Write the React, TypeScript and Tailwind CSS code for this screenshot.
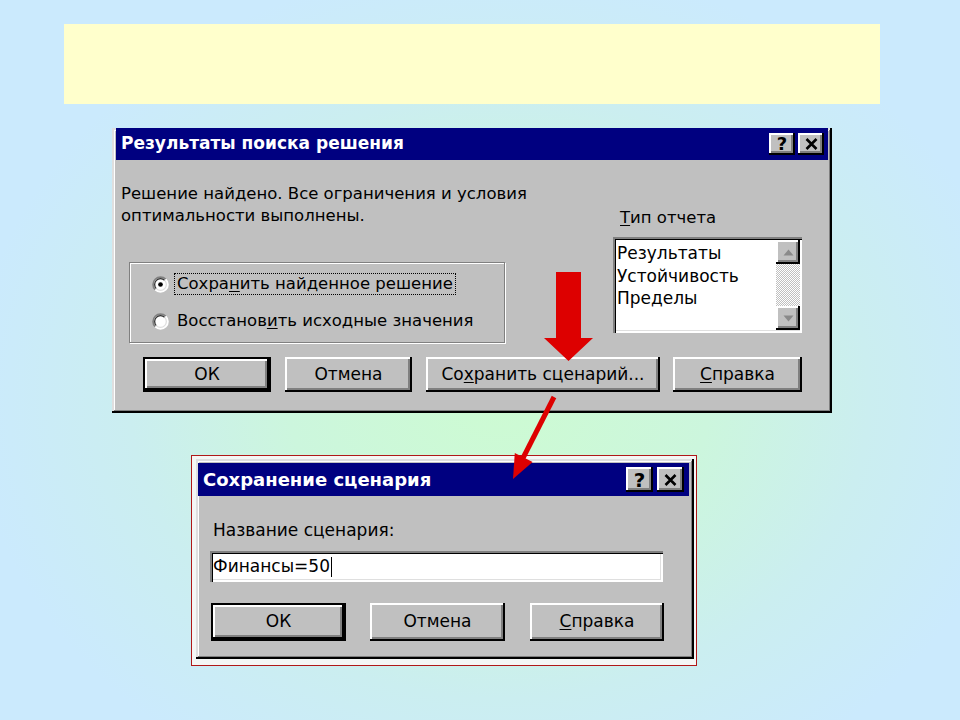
import React from "react"

// Win95 bevels (screenshot is a scaled-up dialog, so the lines are ~2px)
const raised =
  "bg-[#c0c0c0] shadow-[inset_-2px_-2px_0_#000,inset_2px_2px_0_#fff,inset_-4px_-4px_0_#808080]"
const sunken =
  "shadow-[inset_2px_2px_0_#808080,inset_3px_3px_0_#000,inset_-2px_-2px_0_#fff,inset_-3px_-3px_0_#dfdfdf]"
const windowFrame =
  "bg-[#c0c0c0] shadow-[inset_-2px_-2px_0_#000,inset_2px_2px_0_#dfdfdf,inset_-3px_-3px_0_#808080,inset_3px_3px_0_#fff]"

function Radio({ checked }: { checked?: boolean }) {
  return (
    <svg width="17" height="17" viewBox="0 0 16 16" className="shrink-0">
      <circle cx="8" cy="8" r="7" fill="#fff" />
      <path d="M3.05 12.95A7 7 0 0 1 12.95 3.05" stroke="#808080" strokeWidth="1.6" fill="none" />
      <path d="M12.95 3.05A7 7 0 0 1 3.05 12.95" stroke="#ffffff" strokeWidth="1.6" fill="none" />
      <path d="M4.1 11.9A5.5 5.5 0 0 1 11.9 4.1" stroke="#303030" strokeWidth="1.2" fill="none" />
      <path d="M11.9 4.1A5.5 5.5 0 0 1 4.1 11.9" stroke="#dfdfdf" strokeWidth="1.2" fill="none" />
      {checked && <circle cx="8" cy="8" r="2.2" fill="#000" />}
    </svg>
  )
}

function CaptionButtons({ size }: { size: "sm" | "lg" }) {
  const box =
    size === "sm"
      ? "w-[26px] h-[22px] text-[18px]"
      : "w-[27px] h-[25px] text-[20px]"
  return (
    <div className={size === "sm" ? "flex gap-[3px]" : "flex gap-[4px]"}>
      <div className={`${raised} ${box} flex items-center justify-center font-bold leading-none text-black`}>?</div>
      <div className={`${raised} ${box} flex items-center justify-center font-bold leading-none text-black`}>
        <svg width="13" height="12" viewBox="0 0 13 12">
          <path d="M1.5 1l10 10M11.5 1l-10 10" stroke="#000" strokeWidth="2.6" />
        </svg>
      </div>
    </div>
  )
}

function Btn({
  children,
  w,
  isDefault,
  h,
}: {
  children: React.ReactNode
  w: string
  h: string
  isDefault?: boolean
}) {
  return (
    <div
      className={`${w} ${h} ${isDefault ? "border-2 border-black" : ""} flex`}
    >
      <div className={`${raised} flex flex-1 items-center justify-center`}>{children}</div>
    </div>
  )
}

function ScrollArrow({ up }: { up?: boolean }) {
  return (
    <div className={`${raised} flex h-[24px] items-center justify-center`}>
      <svg width="11" height="7" viewBox="0 0 11 7">
        <path d={up ? "M5.5 0.5L10.5 6.5H0.5Z" : "M0.5 0.5H10.5L5.5 6.5Z"} fill="#8a8a8a" />
      </svg>
    </div>
  )
}

function SolverResults() {
  return (
    <div className={`${windowFrame} ml-[112px] mt-[24px] h-[285px] w-[720px] text-[16.5px] text-black`}>
      {/* title bar */}
      <div className="mx-[4px] mt-[4px] flex h-[32px] items-center justify-between bg-[#000080] pl-[5px] pr-[4px]">
        <span className="text-[17px] font-bold text-white">Результаты поиска решения</span>
        <CaptionButtons size="sm" />
      </div>

      <div className="flex">
        <div className="w-[501px] pl-[9px] pt-[23px]">
          <p className="leading-[22px]">
            Решение найдено. Все ограничения и условия
            <br />
            оптимальности выполнены.
          </p>
          {/* options group */}
          <div className="ml-[8px] mt-[35px] h-[81px] w-[376px] border border-[#808080] shadow-[1px_1px_0_#fff,inset_1px_1px_0_#fff]">
            <div className="ml-[22px] mt-[10px] flex h-[22px] items-center gap-[5px]">
              <Radio checked />
              <span className="border border-dotted border-black px-[2px] leading-[20px]">
                Сохра<span className="underline underline-offset-2">н</span>ить найденное решение
              </span>
            </div>
            <div className="ml-[22px] mt-[15px] flex h-[22px] items-center gap-[8px]">
              <Radio />
              <span className="leading-[20px]">
                Восстанов<span className="underline underline-offset-2">и</span>ть исходные значения
              </span>
            </div>
          </div>
        </div>

        <div className="w-[189px] pt-[47px]">
          <div className="pl-[7px] leading-[22px]">
            <span className="underline underline-offset-2">Т</span>ип отчета
          </div>
          {/* report list */}
          <div className={`${sunken} mt-[8px] flex h-[96px] bg-white text-[17px]`}>
            <div className="flex-1 pl-[4px] pt-[5px] leading-[22.5px]">
              <div>Результаты</div>
              <div>Устойчивость</div>
              <div>Пределы</div>
            </div>
            <div className="my-[3px] mr-[2px] flex w-[24px] flex-col">
              <ScrollArrow up />
              <div className="flex-1 bg-[repeating-conic-gradient(#c0c0c0_0_25%,#ffffff_0_50%)] bg-[length:2px_2px]" />
              <ScrollArrow />
            </div>
          </div>
        </div>
      </div>

      {/* buttons */}
      <div className="ml-[31px] mt-[14px] flex text-[17px]">
        <Btn w="w-[128px]" h="h-[35px]" isDefault>
          ОК
        </Btn>
        <div className="ml-[14px]">
          <Btn w="w-[127px]" h="h-[35px]">Отмена</Btn>
        </div>
        <div className="ml-[14px]">
          <Btn w="w-[234px]" h="h-[35px]">
            <span>
              Со<span className="underline underline-offset-2">х</span>ранить сценарий...
            </span>
          </Btn>
        </div>
        <div className="ml-[13px]">
          <Btn w="w-[129px]" h="h-[35px]">
            <span>
              <span className="underline underline-offset-2">С</span>правка
            </span>
          </Btn>
        </div>
      </div>
    </div>
  )
}

function SaveScenario() {
  return (
    <div className="ml-[191px] mt-[42px] h-[211px] w-[506px] border border-[#b01818] bg-[#f4f6f5] pb-[6px] pl-[4px] pr-[2px] pt-[3px]">
      <div className={`${windowFrame} h-[200px] w-[498px] text-[17px] text-black`}>
        <div className="ml-[2px] mr-[5px] pt-[4px]">
          <div className="flex h-[33px] items-center justify-between bg-[#000080] pl-[5px] pr-[5px]">
            <span className="text-[18px] font-bold text-white">Сохранение сценария</span>
            <CaptionButtons size="lg" />
          </div>
        </div>
        <div className="ml-[17px] mt-[23px] leading-[22px]">Название сценария:</div>
        <div className={`${sunken} ml-[14px] mt-[10px] flex h-[31px] w-[453px] items-center bg-white pl-[3px]`}>
          <span>Финансы=50</span>
          <span className="ml-[1px] h-[20px] w-[1px] bg-black" />
        </div>
        <div className="ml-[15px] mt-[21px] flex">
          <Btn w="w-[135px]" h="h-[38px]" isDefault>
            ОК
          </Btn>
          <div className="ml-[24px]">
            <Btn w="w-[135px]" h="h-[38px]">Отмена</Btn>
          </div>
          <div className="ml-[25px]">
            <Btn w="w-[134px]" h="h-[38px]">
              <span>
                <span className="underline underline-offset-2">С</span>правка
              </span>
            </Btn>
          </div>
        </div>
      </div>
    </div>
  )
}

export default function App() {
  return (
    <div className="relative h-[720px] w-[960px] overflow-hidden bg-[radial-gradient(ellipse_55%_60%_at_52%_55%,#cdfbd2_0%,#ccf6dd_40%,#cbeef0_70%,#cbeafd_100%)] pt-[24px] font-['DejaVu_Sans',sans-serif]">
      {/* empty title placeholder */}
      <div className="ml-[64px] h-[80px] w-[816px] bg-[#ffffcc]" />

      <SolverResults />
      <SaveScenario />

      {/* red arrows over the dialogs */}
      <svg className="pointer-events-none absolute inset-0" width="960" height="720" viewBox="0 0 960 720">
        <polygon points="556,272 581,272 581,338 593,338 568.5,361 544,338 556,338" fill="#dd0000" />
        <line x1="554" y1="397" x2="521" y2="462" stroke="#dd0000" strokeWidth="5" />
        <polygon points="513,479 532.6,462 514.8,453" fill="#dd0000" />
      </svg>
    </div>
  )
}
